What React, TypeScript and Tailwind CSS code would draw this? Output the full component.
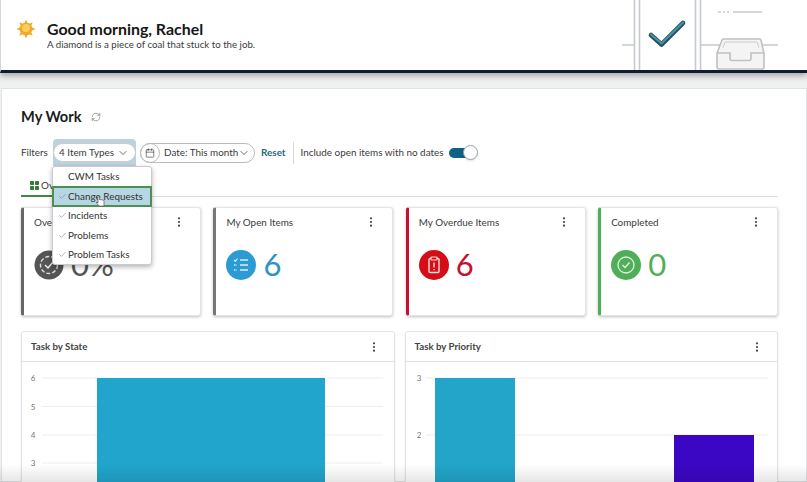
import React from "react";
import { ChevronDown, Check, Calendar, RefreshCw } from "lucide-react";

function Kebab() {
  return (
    <svg width="4" height="10" viewBox="0 0 4 10" className="shrink-0">
      <circle cx="2" cy="1.3" r="1.1" fill="#444" />
      <circle cx="2" cy="5" r="1.1" fill="#444" />
      <circle cx="2" cy="8.7" r="1.1" fill="#444" />
    </svg>
  );
}

function Sun() {
  const rays = [0, 45, 90, 135, 180, 225, 270, 315];
  return (
    <svg width="20" height="20" viewBox="0 0 20 20" className="-mt-[12px] shrink-0">
      {rays.map((r) => (
        <path key={r} d="M10 0.5 L11.4 4 L8.6 4 Z" fill="#e9a92c" transform={`rotate(${r} 10 10)`} />
      ))}
      <circle cx="10" cy="10" r="6.4" fill="#f3a924" />
      <circle cx="10" cy="9" r="4" fill="#f9cd5c" />
    </svg>
  );
}

function HeaderArt() {
  return (
    <svg width="187" height="70" viewBox="620 0 187 70" className="shrink-0">
      <g fill="none" stroke="#c6c9cc" strokeWidth="1.6">
        <path d="M622 45H634M700 45H778" />
        <path d="M634.5 0V70M639.5 0V70M695.5 0V70M700.5 0V70" />
        <path d="M718 12H721M723 12H725M727 12H729M733 12H762" />
      </g>
      <path d="M651 35L661.5 44.5L683 23" fill="none" stroke="#2c4a5c" strokeWidth="4.6" strokeLinecap="round" strokeLinejoin="round" />
      <path d="M651 34.5L661.5 43.5L683 22.5" fill="none" stroke="#3f96a9" strokeWidth="2.2" strokeLinecap="round" strokeLinejoin="round" />
      <path d="M717 53L722 40Q722.5 39 724 39H759Q760.5 39 761 40L764 53V67Q764 69 762 69H719Q717 69 717 67Z" fill="#f4f4f5" stroke="#bfc1c4" strokeWidth="1.6" />
      <path d="M717 53H730V58Q730 60.5 732 60.5H749Q751 60.5 751 58V53H764" fill="none" stroke="#bfc1c4" strokeWidth="1.6" />
      <path d="M723 47.5L725 42H757L759 47.5" fill="none" stroke="#c9cbce" strokeWidth="1" />
    </svg>
  );
}

function DashIcon() {
  return (
    <svg width="30" height="30" viewBox="0 0 30 30" className="shrink-0">
      <circle cx="15" cy="15" r="14.5" fill="#555" />
      <circle cx="15" cy="15" r="8.5" fill="none" stroke="#ddd" strokeWidth="1.4" strokeDasharray="4 2" />
      <path d="M11 15l3 3 5-6" fill="none" stroke="#eee" strokeWidth="1.4" />
    </svg>
  );
}
function ListIcon() {
  return (
    <svg width="30" height="30" viewBox="0 0 30 30" className="shrink-0">
      <circle cx="15" cy="15" r="15" fill="#2d9bd3" />
      <path d="M14 10H22M14 15H22M14 20H22" stroke="#d8eefa" strokeWidth="1.6" />
      <path d="M8 10l1.3 1.3L11.5 8.5" fill="none" stroke="#d8eefa" strokeWidth="1.2" />
      <path d="M8 15h3M8 20h3" stroke="#d8eefa" strokeWidth="1.6" strokeDasharray="1.5 1" />
    </svg>
  );
}
function ClipIcon() {
  return (
    <svg width="30" height="30" viewBox="0 0 30 30" className="shrink-0">
      <circle cx="15" cy="15" r="15" fill="#d40d17" />
      <rect x="10" y="8.5" width="10" height="14" rx="1" fill="none" stroke="#fbdcdc" strokeWidth="1.4" />
      <rect x="12" y="7" width="6" height="3" rx="0.8" fill="#d40d17" stroke="#fbdcdc" strokeWidth="1.2" />
      <path d="M15 12.5V17.5M15 19V20.2" stroke="#fbdcdc" strokeWidth="1.4" />
    </svg>
  );
}
function DoneIcon() {
  return (
    <svg width="30" height="30" viewBox="0 0 30 30" className="shrink-0">
      <circle cx="15" cy="15" r="15" fill="#4fae57" />
      <circle cx="15" cy="15" r="8" fill="none" stroke="#dff3e0" strokeWidth="1.3" />
      <path d="M11.5 15l2.5 2.5 4.5-5" fill="none" stroke="#dff3e0" strokeWidth="1.4" />
    </svg>
  );
}

function Card({
  title,
  value,
  icon,
  edge,
  color,
}: {
  title: string;
  value: string;
  icon: React.ReactNode;
  edge: string;
  color: string;
}) {
  return (
    <div className={`h-[109px] rounded-[3px] bg-white border border-[#e3e4e6] border-l-[3px] ${edge} shadow-[0_1px_3px_rgba(0,0,0,0.25)] pl-[10px] pr-[19px] pt-[6px]`}>
      <div className="flex items-center justify-between h-4 text-[9.9px] text-[#3a3a3c]">
        <span>{title}</span>
        <Kebab />
      </div>
      <div className="flex items-center mt-[20px] gap-[7px]">
        {icon}
        <span className={`text-[31px] leading-[30px] font-normal -mt-[2px] ${color}`}>{value}</span>
      </div>
    </div>
  );
}

function ChartCard({ title, children }: { title: string; children: React.ReactNode }) {
  return (
    <div className="h-[170px] rounded-[3px] bg-white border border-[#e2e3e5] shadow-[0_1px_2px_rgba(0,0,0,0.1)]">
      <div className="flex items-center justify-between h-[30px] pl-[9px] pr-[18px] border-b border-[#e2e3e5] text-[9.7px] font-bold text-[#444]">
        <span>{title}</span>
        <Kebab />
      </div>
      {children}
    </div>
  );
}

function MenuRow({ label, checked, active }: { label: string; checked?: boolean; active?: boolean }) {
  return (
    <div
      className={`relative flex items-center h-[19.5px] pl-[14px] text-[9.9px] text-[#333] whitespace-nowrap ${
        active ? "bg-[#b7d6e4] outline-2 -outline-offset-1 outline-[#4c9152]" : ""
      }`}
    >
      <span className="w-[9px] shrink-0 flex items-center -ml-[9px] mr-[1px]">
        {checked && <Check size={9} strokeWidth={1.5} className="text-[#777]" />}
      </span>
      <span>{label}</span>
    </div>
  );
}

export default function App() {
  return (
    <div className="relative h-[482px] w-[807px] overflow-hidden bg-[#eff1f1] font-['Lato','Liberation_Sans',sans-serif]">
      <header className="flex items-center justify-between h-[73px] bg-white border-l border-[#d5d6d8] border-b-[3px] border-b-[#0e1c2e] shadow-[0_3px_6px_rgba(0,0,0,0.3)]">
        <div className="flex items-center pl-[15px]">
          <Sun />
          <div className="ml-[11px]">
            <div className="text-[15.9px] leading-[18px] font-bold text-[#161616]">Good morning, Rachel</div>
            <div className="text-[9.7px] leading-[12px] text-[#3a3a3c]">A diamond is a piece of coal that stuck to the job.</div>
          </div>
        </div>
        <HeaderArt />
      </header>

      <main className="relative mt-[15px] ml-[1px] h-[394px] bg-white border border-[#e2e3e5] pl-[19px] pr-[28px] pt-[17px]">
        <div className="flex items-center h-[22px]">
          <h1 className="text-[14.6px] font-bold text-[#1b1b1b]">My Work</h1>
          <RefreshCw size={10} strokeWidth={1.4} className="ml-[9px] text-[#666]" />
        </div>

        <div className="flex items-center mt-[12px] h-[25px] text-[9.9px] text-[#3a3a3c] whitespace-nowrap">
          <span className="w-[32px]">Filters</span>
          <div className="flex items-center h-[27px] w-[83px] rounded-t-[4px] bg-[#bcd3dc]">
            <div className="flex items-center justify-between w-full h-[19px] rounded-full bg-white border border-[#c9cbce] pl-[5px] pr-[6px]">
              <span>4 Item Types</span>
              <ChevronDown size={12} strokeWidth={1.5} />
            </div>
          </div>
          <div className="flex items-center ml-[4px] h-[20px] w-[115px] rounded-full border border-[#b9bbbe] bg-white">
            <span className="flex items-center justify-center h-[20px] w-[20px] -ml-px rounded-full border border-[#b9bbbe]">
              <Calendar size={10} strokeWidth={1.5} />
            </span>
            <span className="ml-[4px]">Date: This month</span>
            <ChevronDown size={12} strokeWidth={1.5} />
          </div>
          <span className="ml-[6px] font-bold text-[#27687f]">Reset</span>
          <span className="ml-[7px] h-[22px] w-px bg-[#d8d9db]" />
          <span className="ml-[7px]">Include open items with no dates</span>
          <div className="relative ml-[6px] flex items-center w-[29px] h-[15px]">
            <span className="w-[22px] h-[10px] rounded-full bg-[#0f6285]" />
            <span className="absolute right-0 top-0 h-[15px] w-[15px] rounded-full bg-white border border-[#9fa2a6] shadow-sm" />
          </div>
        </div>

        <div className="flex items-center h-[31px] mt-[1px] border-b border-[#dcdddf]">
          <div className="flex items-center h-[31px] w-[32px] pl-[9px] pt-[9px] border-b-2 border-[#3d8a45] text-[9.9px] text-[#3a3a3c] -mb-px">
            <svg width="9" height="9" viewBox="0 0 9 9" className="mr-[2px] shrink-0">
              <rect width="4" height="4" rx="0.8" fill="#2f7d36" />
              <rect x="5" width="4" height="4" rx="0.8" fill="#2f7d36" />
              <rect y="5" width="4" height="4" rx="0.8" fill="#2f7d36" />
              <rect x="5" y="5" width="4" height="4" rx="0.8" fill="#2f7d36" />
            </svg>
            Ov
          </div>
        </div>

        <div className="grid grid-cols-4 gap-[12.5px] mt-[10px]">
          <Card title="Overdue" value="0%" icon={<DashIcon />} edge="border-l-[#666]" color="text-[#555]" />
          <Card title="My Open Items" value="6" icon={<ListIcon />} edge="border-l-[#777]" color="text-[#2f93c6]" />
          <Card title="My Overdue Items" value="6" icon={<ClipIcon />} edge="border-l-[#c8102e]" color="text-[#c8102e]" />
          <Card title="Completed" value="0" icon={<DoneIcon />} edge="border-l-[#4fae57]" color="text-[#4fae57]" />
        </div>

        <div className="grid grid-cols-2 gap-[10px] mt-[15px]">
          <ChartCard title="Task by State">
            <svg width="372" height="130" viewBox="0 0 372 130" className="block">
              {[
                ["6", 16],
                ["5", 44.5],
                ["4", 73],
                ["3", 101],
              ].map(([l, y]) => (
                <g key={l as string}>
                  <line x1="20" x2="361" y1={y as number} y2={y as number} stroke="#eceded" />
                  <text x="11" y={(y as number) + 3} textAnchor="middle" fontSize="8" fill="#777">
                    {l}
                  </text>
                </g>
              ))}
              <rect x="75" y="16" width="228" height="114" fill="#22a5cc" />
            </svg>
          </ChartCard>
          <ChartCard title="Task by Priority">
            <svg width="372" height="130" viewBox="0 0 372 130" className="block">
              {[
                ["3", 16],
                ["2", 73],
              ].map(([l, y]) => (
                <g key={l as string}>
                  <line x1="20" x2="362" y1={y as number} y2={y as number} stroke="#eceded" />
                  <text x="13" y={(y as number) + 3} textAnchor="middle" fontSize="8" fill="#777">
                    {l}
                  </text>
                </g>
              ))}
              <rect x="29" y="16" width="80" height="114" fill="#22a5c9" />
              <rect x="268" y="73" width="80" height="57" fill="#3b07c4" />
            </svg>
          </ChartCard>
        </div>

        <div className="absolute left-[50px] top-[77px] w-[100px] h-[99px] rounded-[3px] bg-white border border-[#c9cbce] shadow-[0_2px_5px_rgba(0,0,0,0.3)]">
          <MenuRow label="CWM Tasks" />
          <MenuRow label="Change Requests" checked active />
          <MenuRow label="Incidents" checked />
          <MenuRow label="Problems" checked />
          <MenuRow label="Problem Tasks" checked />
          <svg width="10" height="12" viewBox="0 0 10 12" className="absolute left-[43px] top-[28px]">
            <path d="M2 1.5V8L1 7Q0 6.5 .5 8L3 11H8V6Q8 5 7 5L3.5 4.5V1.5Q2.7.7 2 1.5Z" fill="#fff" stroke="#555" strokeWidth="0.7" />
          </svg>
        </div>
      </main>

      <div className="absolute bottom-0 left-0 right-0 h-[18px] bg-gradient-to-b from-transparent to-black/10" />
    </div>
  );
}
